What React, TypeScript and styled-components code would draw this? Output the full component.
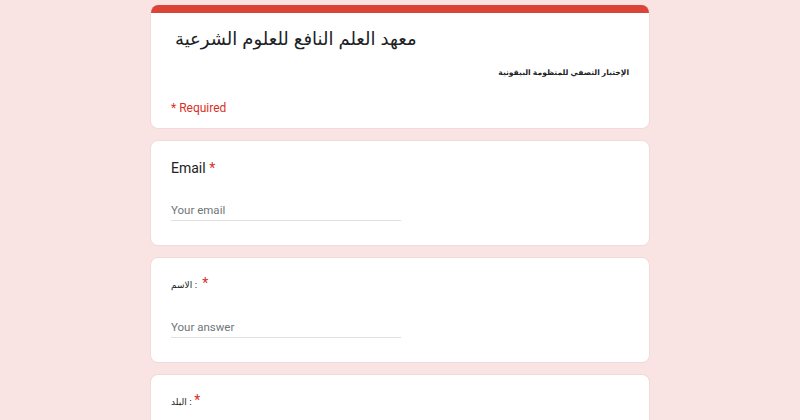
import React from "react";
import styled, { createGlobalStyle } from "styled-components";

const Global = createGlobalStyle`
  html, body { margin: 0; padding: 0; background: #fae3e3; }
  body { font-family: Roboto, "Liberation Sans", sans-serif; color: #202124; }
`;

const Page = styled.div`
  width: 500px;
  margin: 5px auto 0;
  display: flex;
  flex-direction: column;
  gap: 11px;
`;

const Card = styled.div<{ $top?: boolean }>`
  background: #ffffff;
  border-radius: 8px;
  border: 1px solid #f0dada;
  box-sizing: border-box;
  overflow: hidden;
  padding: ${(p) => (p.$top ? "0 20px 12px" : "17px 20px 24px")};
  ${(p) => (p.$top ? "border-top: none;" : "")}
`;

const TopBar = styled.div`
  height: 8px;
  background: #db4437;
  margin: 0 -21px 10px;
`;

const Title = styled.div`
  font-family: "Liberation Sans", Arial, "DejaVu Sans", sans-serif;
  font-size: 18px;
  line-height: 32px;
  padding-left: 4px;
  color: #202124;
`;

const Description = styled.div`
  font-family: "Liberation Sans", Arial, "DejaVu Sans", sans-serif;
  font-size: 7.6px;
  font-weight: bold;
  line-height: 16px;
  margin-top: 10px;
  text-align: right;
  direction: rtl;
  color: #202124;
`;

const Required = styled.div`
  font-size: 12px;
  line-height: 16px;
  margin-top: 19px;
  color: #d93025;
`;

const Label = styled.div<{ $small?: boolean }>`
  font-family: ${(p) => (p.$small ? `"Liberation Sans", Arial, "DejaVu Sans", sans-serif` : `Roboto, sans-serif`)};
  font-size: ${(p) => (p.$small ? "9px" : "14px")};
  line-height: 20px;
  height: 20px;
  color: #202124;
`;

const Star = styled.span`
  color: #d93025;
  font-family: Roboto, sans-serif;
  font-size: 14px;
  line-height: 1;
`;

const Input = styled.div`
  margin-top: 18px;
  width: 230px;
  height: 25px;
  box-sizing: border-box;
  border-bottom: 1px solid #e0e0e0;
  font-family: Roboto, sans-serif;
  font-size: 11.5px;
  line-height: 28px;
  color: #70757a;
`;

export default function App() {
  return (
    <>
      <Global />
      <Page>
        <Card $top>
          <TopBar />
          <Title>معهد العلم النافع للعلوم الشرعية</Title>
          <Description>الإختبار النصفي للمنظومة البيقونية</Description>
          <Required>* Required</Required>
        </Card>
        <Card>
          <Label>
            Email <Star>*</Star>
          </Label>
          <Input>Your email</Input>
        </Card>
        <Card>
          <Label $small>
            الاسم :&nbsp; <Star>*</Star>
          </Label>
          <Input>Your answer</Input>
        </Card>
        <Card>
          <Label $small>
            البلد : <Star>*</Star>
          </Label>
          <Input>Your answer</Input>
        </Card>
      </Page>
    </>
  );
}
